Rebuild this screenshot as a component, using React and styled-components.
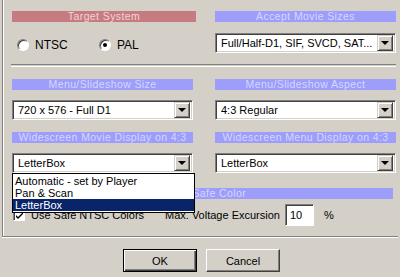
import styled, { createGlobalStyle } from "styled-components"

const Global = createGlobalStyle`
  body {
    margin: 0;
    background: #d4d0c8;
    font-family: "Liberation Sans", Arial, sans-serif;
    font-size: 11px;
    color: #000;
  }
`

const Page = styled.div`
  width: 400px;
  height: 277px;
  overflow: hidden;
  background: #d4d0c8;
`

const Frame = styled.div`
  margin-left: 2px;
  width: 396px;
  border-left: 1px solid #808080;
  border-bottom: 1px solid #808080;
  box-shadow: inset 1px 0 #fff, 0 1px #fff;
  padding: 11px 0 10px 9px;
  box-sizing: border-box;
  display: grid;
  grid-template-columns: 181px 181px;
  column-gap: 22px;
`

const Cell = styled.div`
  display: flex;
  flex-direction: column;
  margin-top: ${p => p.$top || 0}px;
  grid-column: ${p => (p.$wide ? "1 / -1" : "auto")};
`

const Header = styled.div`
  height: 11px;
  width: ${p => p.$width || "100%"};
  background: ${p => (p.$pink ? "#c67b80" : "#9d9dfb")};
  color: ${p => (p.$pink ? "#f2d4d6" : "#d6d6ff")};
  font-size: 10.5px;
  letter-spacing: 0.4px;
  line-height: 11px;
  text-align: center;
  white-space: nowrap;
`

const Separator = styled.div`
  grid-column: 1 / -1;
  margin: 11px 0 0 -1px;
  height: 1px;
  border-top: 1px solid #808080;
  border-bottom: 1px solid #fff;
`

const RadioRow = styled.div`
  display: flex;
  align-items: center;
  margin-top: 16px;
  padding-left: 5px;
`

const RadioItem = styled.label`
  display: flex;
  align-items: center;
  gap: 6px;
  width: ${p => p.$width}px;
  font-size: 12px;
`

const RadioCircle = styled.span`
  width: 12px;
  height: 12px;
  border-radius: 50%;
  box-sizing: border-box;
  background: #fff;
  border: 1px solid;
  border-color: #808080 #fff #fff #808080;
  box-shadow: inset 1px 1px #404040;
  display: flex;
  align-items: center;
  justify-content: center;
  &::after {
    content: "";
    width: 4px;
    height: 4px;
    border-radius: 50%;
    background: ${p => (p.$on ? "#000" : "transparent")};
  }
`

const SelectWrap = styled.div`
  position: relative;
  margin-top: ${p => p.$top || 10}px;
`

const SelectBox = styled.div`
  height: 20px;
  box-sizing: border-box;
  background: #fff;
  border: 1px solid;
  border-color: #808080 #fff #fff #808080;
  box-shadow: inset 1px 1px #404040, inset -1px -1px #d4d0c8;
  display: flex;
  align-items: center;
  padding: 2px;
`

const SelectText = styled.span`
  flex: 1;
  padding-left: 3px;
  font-size: 11px;
  white-space: nowrap;
  overflow: hidden;
`

const ArrowButton = styled.span`
  width: 16px;
  height: 16px;
  box-sizing: border-box;
  background: #d4d0c8;
  border: 1px solid;
  border-color: #d4d0c8 #404040 #404040 #d4d0c8;
  box-shadow: inset 1px 1px #fff, inset -1px -1px #808080;
  display: flex;
  align-items: center;
  justify-content: center;
  &::after {
    content: "";
    border-left: 4px solid transparent;
    border-right: 4px solid transparent;
    border-top: 4px solid #000;
  }
`

const ListBox = styled.ul`
  position: absolute;
  top: 100%;
  left: 0;
  width: calc(100% + 2px);
  margin: 0;
  padding: 1px 0;
  list-style: none;
  background: #fff;
  border: 1px solid #000;
  box-sizing: border-box;
  z-index: 2;
`

const ListItem = styled.li`
  height: 12px;
  line-height: 12px;
  padding-left: 2px;
  font-size: 11px;
  background: ${p => (p.$sel ? "#0a246a" : "transparent")};
  color: ${p => (p.$sel ? "#fff" : "#000")};
`

const SafeRow = styled.div`
  display: flex;
  align-items: center;
  height: 22px;
  margin-top: 5px;
  font-size: 11px;
`

const Check = styled.span`
  width: 12px;
  height: 12px;
  box-sizing: border-box;
  background: #fff;
  border: 1px solid;
  border-color: #808080 #fff #fff #808080;
  box-shadow: inset 1px 1px #404040;
  margin: 0 6px 0 1px;
  display: flex;
  align-items: center;
  justify-content: center;
`

const Label = styled.span`
  width: ${p => p.$width}px;
  white-space: nowrap;
`

const NumInput = styled.div`
  width: 29px;
  height: 22px;
  box-sizing: border-box;
  background: #fff;
  border: 1px solid;
  border-color: #808080 #fff #fff #808080;
  box-shadow: inset 1px 1px #404040;
  padding: 4px 0 0 4px;
  margin-right: 10px;
`

const Buttons = styled.div`
  display: flex;
  justify-content: center;
  gap: 9px;
  margin-top: 12px;
  padding-left: 3px;
`

const Button = styled.button`
  width: 74px;
  height: 23px;
  box-sizing: border-box;
  background: #d4d0c8;
  font-family: inherit;
  font-size: 11px;
  color: #000;
  border: 1px solid;
  border-color: ${p => (p.$default ? "#000" : "#fff #404040 #404040 #fff")};
  box-shadow: ${p =>
    p.$default
      ? "inset 1px 1px #fff, inset -1px -1px #404040, inset -2px -2px #808080"
      : "inset -1px -1px #808080"};
  padding: 0;
`

const Select = ({ value, top, children }) => (
  <SelectWrap $top={top}>
    <SelectBox>
      <SelectText>{value}</SelectText>
      <ArrowButton />
    </SelectBox>
    {children}
  </SelectWrap>
)

const App = () => {
  return (
    <Page>
      <Global />
      <Frame>
        <Cell>
          <Header $pink $width="184px">Target System</Header>
          <RadioRow>
            <RadioItem $width={82}>
              <RadioCircle />
              NTSC
            </RadioItem>
            <RadioItem $width={60}>
              <RadioCircle $on />
              PAL
            </RadioItem>
          </RadioRow>
        </Cell>
        <Cell>
          <Header>Accept Movie Sizes</Header>
          <Select value="Full/Half-D1, SIF, SVCD, SAT..." top={11} />
        </Cell>

        <Separator />

        <Cell $top={12}>
          <Header>Menu/Slideshow Size</Header>
          <Select value="720 x 576 - Full D1" />
        </Cell>
        <Cell $top={12}>
          <Header>Menu/Slideshow Aspect</Header>
          <Select value="4:3  Regular" />
        </Cell>

        <Cell $top={12}>
          <Header>Widescreen Movie Display on 4:3</Header>
          <Select value="LetterBox">
            <ListBox>
              <ListItem>Automatic - set by Player</ListItem>
              <ListItem>Pan &amp; Scan</ListItem>
              <ListItem $sel>LetterBox</ListItem>
            </ListBox>
          </Select>
        </Cell>
        <Cell $top={12}>
          <Header>Widescreen Menu Display on 4:3</Header>
          <Select value="LetterBox" />
        </Cell>

        <Cell $wide $top={15}>
          <Header $width="381px">NTSC Safe Color</Header>
          <SafeRow>
            <Check>
              <svg width="7" height="7" viewBox="0 0 7 7">
                <path d="M0 3 L2 5 L7 0 L7 2 L2 7 L0 5 Z" fill="#000" />
              </svg>
            </Check>
            <Label $width={134}>Use Safe NTSC Colors</Label>
            <Label $width={120}>Max. Voltage Excursion</Label>
            <NumInput>10</NumInput>
            <Label>%</Label>
          </SafeRow>
        </Cell>
      </Frame>
      <Buttons>
        <Button $default>OK</Button>
        <Button>Cancel</Button>
      </Buttons>
    </Page>
  )
}

export default App
